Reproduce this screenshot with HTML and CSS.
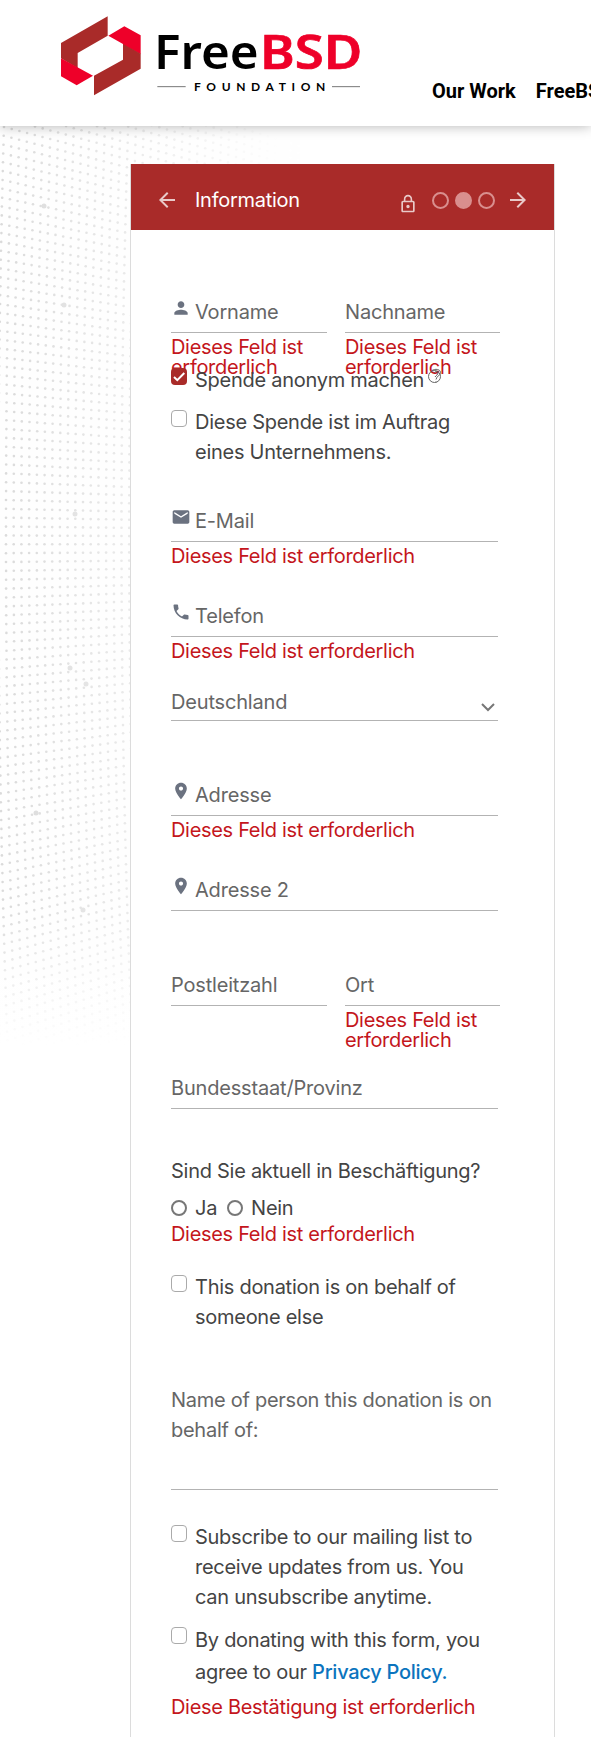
FILE: index.html
```html
<!DOCTYPE html>
<html lang="de">

<head>
    <meta charset="UTF-8">
    <title>FreeBSD Foundation</title>
    <link rel="stylesheet" href="styles.css">
</head>

<body>

    <svg class="dots" width="300" height="920" viewBox="0 126 300 920">
        <defs>
            <linearGradient id="fadeX" gradientUnits="userSpaceOnUse" x1="0" x2="290" y1="0" y2="0">
                <stop offset="0" stop-color="#dadada" />
                <stop offset="0.45" stop-color="#eaeaea" />
                <stop offset="1" stop-color="#fff" />
            </linearGradient>
            <linearGradient id="fadeY" x1="0" x2="0" y1="0" y2="1">
                <stop offset="0" stop-color="#fff" stop-opacity="0" />
                <stop offset="1" stop-color="#fff" />
            </linearGradient>
        </defs>
        <rect y="126" width="300" height="920" fill="#fefefe" />
        <g id="prikker" fill="url(#fadeX)"></g>
        <rect y="910" width="300" height="136" fill="url(#fadeY)" />
    </svg>

    <header class="banner">
        <svg class="logo" width="340" height="126" viewBox="0 0 1020 378">
            <polygon fill="#a92b29" points="63,129 203,49 203,107 113,159 113,205 63,175" />
            <polygon fill="#ee0029" points="63,175 159,227 110,256 63,229" />
            <polygon fill="#ee0029" points="205,107 253,79 302,106 302,163 249,135 249,132" />
            <polygon fill="#a92b29" points="249,132 302,161 302,206 162,286 162,227 249,179" />
            <g font-family="Noto Sans, sans-serif" font-size="141">
                <text x="342" y="206" font-weight="600" textLength="314" lengthAdjust="spacingAndGlyphs">Free</text>
                <text x="660" y="206" font-weight="600" fill="#ee0029" stroke="#ee0029" stroke-width="2" textLength="307" lengthAdjust="spacingAndGlyphs">BSD</text>
            </g>
            <text x="462" y="273" font-family="Lato, sans-serif" font-size="36" font-weight="700" textLength="394">FOUNDATION</text>
            <path d="M352 260H437M876 260H960" stroke="#777" stroke-width="3" />
        </svg>
        <nav class="menu">
            <a>Our Work</a>
            <a>FreeBSD</a>
        </nav>
    </header>

    <main class="card">
        <div class="topbar">
            <svg class="arrow" width="24" height="24" viewBox="0 0 24 24"><path d="M20 11H7.830l5.590-5.590L12 4l-8 8 8 8 1.410-1.410L7.830 13H20z" /></svg>
            <span class="title">Information</span>
            <svg class="lock" width="20" height="20" viewBox="0 0 24 24"><path d="M12 17c1.100 0 2-.9 2-2s-.9-2-2-2-2 .9-2 2 .9 2 2 2zm6-9h-1V6c0-2.760-2.240-5-5-5S7 3.240 7 6v2H6c-1.100 0-2 .9-2 2v10c0 1.100.9 2 2 2h12c1.100 0 2-.9 2-2V10c0-1.100-.9-2-2-2zM8.900 6c0-1.710 1.390-3.100 3.100-3.100s3.100 1.390 3.100 3.100v2H8.900V6zM18 20H6V10h12z" /></svg>
            <div class="steps">
                <i class="step"></i>
                <i class="step active"></i>
                <i class="step"></i>
            </div>
            <svg class="arrow" width="24" height="24" viewBox="0 0 24 24"><path d="M12 4l-1.410 1.410L16.170 11H4v2h12.170l-5.580 5.590L12 20l8-8z" /></svg>
        </div>

        <form class="form">
            <div class="row names">
                <div class="field">
                    <div class="input">
                        <svg class="icon" viewBox="0 0 24 24"><path d="M12 12c2.210 0 4-1.790 4-4s-1.790-4-4-4-4 1.790-4 4 1.790 4 4 4zm0 2c-2.670 0-8 1.340-8 4v2h16v-2c0-2.660-5.330-4-8-4z" /></svg>
                        <label>Vorname</label>
                    </div>
                    <p class="error">Dieses Feld ist erforderlich</p>
                </div>
                <div class="field">
                    <div class="input"><label>Nachname</label></div>
                    <p class="error">Dieses Feld ist erforderlich</p>
                </div>
            </div>

            <div class="check anonym">
                <svg class="box" width="16" height="17" viewBox="0 0 16 17"><rect width="16" height="17" rx="4" fill="#a92b29" /><path d="M3 9l3.300 3.200L13.300 5" fill="none" stroke="#fff" stroke-width="2" /></svg>
                <span>Spende anonym machen</span>
                <svg class="help" width="14" height="16" viewBox="0 0 14 16"><circle cx="6.500" cy="8.500" r="6" /><path d="M4 2.500C7 .5 12.500 1 12.500 4.500c0 3-4 3.500-4.500 7M8 13.500v1M6 5c1.500-2 4-1.500 4 0s-2 2.500-3 4" /></svg>
            </div>
            <div class="check">
                <i class="box empty"></i>
                <span>Diese Spende ist im Auftrag eines Unternehmens.</span>
            </div>

            <div class="field email">
                <div class="input">
                    <svg class="icon" viewBox="0 0 24 24"><path d="M20 4H4c-1.100 0-1.990.9-1.990 2L2 18c0 1.100.9 2 2 2h16c1.100 0 2-.9 2-2V6c0-1.100-.9-2-2-2zm0 4l-8 5-8-5V6l8 5 8-5v2z" /></svg>
                    <label>E-Mail</label>
                </div>
                <p class="error">Dieses Feld ist erforderlich</p>
            </div>
            <div class="field phone">
                <div class="input">
                    <svg class="icon" viewBox="0 0 24 24"><path d="M6.620 10.790c1.440 2.830 3.760 5.140 6.590 6.590l2.200-2.200c.27-.27.67-.36 1.020-.24 1.120.37 2.330.57 3.570.57.55 0 1 .45 1 1V20c0 .55-.45 1-1 1-9.390 0-17-7.610-17-17 0-.55.45-1 1-1h3.500c.55 0 1 .45 1 1 0 1.250.2 2.450.57 3.570.11.35.03.74-.25 1.020l-2.200 2.200z" /></svg>
                    <label>Telefon</label>
                </div>
                <p class="error">Dieses Feld ist erforderlich</p>
            </div>
            <div class="field country">
                <div class="input select">
                    <label>Deutschland</label>
                    <svg class="chevron" width="14" height="9" viewBox="0 0 14 9"><path d="M1 1l6 6 6-6" /></svg>
                </div>
            </div>
            <div class="field">
                <div class="input">
                    <svg class="icon" viewBox="0 0 24 24"><path d="M12 2C8.130 2 5 5.130 5 9c0 5.250 7 13 7 13s7-7.750 7-13c0-3.870-3.130-7-7-7zm0 9.500c-1.380 0-2.500-1.120-2.500-2.500s1.120-2.500 2.500-2.500 2.500 1.120 2.500 2.500-1.120 2.500-2.500 2.500z" /></svg>
                    <label>Adresse</label>
                </div>
                <p class="error">Dieses Feld ist erforderlich</p>
            </div>
            <div class="field">
                <div class="input">
                    <svg class="icon" viewBox="0 0 24 24"><path d="M12 2C8.130 2 5 5.130 5 9c0 5.250 7 13 7 13s7-7.750 7-13c0-3.870-3.130-7-7-7zm0 9.500c-1.380 0-2.500-1.120-2.500-2.500s1.120-2.500 2.500-2.500 2.500 1.120 2.500 2.500-1.120 2.500-2.500 2.500z" /></svg>
                    <label>Adresse 2</label>
                </div>
            </div>
            <div class="row city">
                <div class="field">
                    <div class="input"><label>Postleitzahl</label></div>
                </div>
                <div class="field">
                    <div class="input"><label>Ort</label></div>
                    <p class="error">Dieses Feld ist erforderlich</p>
                </div>
            </div>
            <div class="field state">
                <div class="input"><label>Bundesstaat/Provinz</label></div>
            </div>

            <p class="question">Sind Sie aktuell in Beschäftigung?</p>
            <div class="radios">
                <i class="radio"></i><span>Ja</span>
                <i class="radio"></i><span>Nein</span>
            </div>
            <p class="error tight">Dieses Feld ist erforderlich</p>

            <div class="check behalf">
                <i class="box empty"></i>
                <span>This donation is on behalf of someone else</span>
            </div>
            <div class="person">
                <label>Name of person this donation is on behalf of:</label>
            </div>
            <div class="check">
                <i class="box empty"></i>
                <span>Subscribe to our mailing list to receive updates from us. You can unsubscribe anytime.</span>
            </div>
            <div class="check privacy">
                <i class="box empty"></i>
                <span>By donating with this form, you agree to our <a>Privacy Policy.</a></span>
            </div>
            <p class="error confirm">Diese Bestätigung ist erforderlich</p>
        </form>
    </main>

    <script>
        // rows of dots that bend up towards the bottom
        let dots = "";
        for (let r = -8; r < 115; r++) {
            for (let c = -4; c < 40; c++) {
                const y0 = 126 + r * 8.9;
                const t = (y0 - 126) / 900;
                const x = c * 7.7 + 28 * (t - 0.45) * (t - 0.45) + 6;
                const y = y0 + x * (0.26 - 0.56 * t);
                dots += `<circle cx="${x.toFixed(1)}" cy="${y.toFixed(1)}" r="1.3"/>`;
            }
        }
        // a few bigger dots
        [[44, 206], [64, 305], [75, 514], [70, 668], [86, 684], [36, 813], [83, 910]].forEach(p => {
            dots += `<circle cx="${p[0]}" cy="${p[1]}" r="2.5"/>`;
        });
        document.querySelector("#prikker").innerHTML = dots;
    </script>

</body>

</html>
```
FILE: styles.css
```css
* {
    box-sizing: border-box;
}

body {
    margin: 0;
    height: 1737px;
    overflow: hidden;
    position: relative;
    background-color: #fff;
    font-family: Inter, "Liberation Sans", sans-serif;
    font-size: 20px;
    line-height: 30px;
    letter-spacing: -0.27px;
    color: #444;
}

p {
    margin: 0;
}

svg {
    display: block;
    flex-shrink: 0;
}

.dots {
    position: absolute;
    left: 0;
    top: 126px;
    z-index: -1;
}

.banner {
    display: flex;
    height: 126px;
    padding-left: 40px;
    letter-spacing: 0;
    background-color: #fff;
    box-shadow: 0 0 12px rgba(0, 0, 0, 0.3);
}

.menu {
    display: flex;
    gap: 20px;
    padding: 76px 0 0 52px;
    font-family: Roboto, sans-serif;
    font-weight: 700;
    font-size: 20px;
    color: #000;
    white-space: nowrap;
}

.card {
    width: 425px;
    height: 1600px;
    margin: 38px 0 0 130px;
    border: 1px solid #dcdcdc;
    border-top: 0;
    background-color: #fff;
}

.topbar {
    display: flex;
    align-items: center;
    height: 66px;
    padding: 6px 24px 0;
    background-color: #a92b29;
    color: #fff;
}

.arrow,
.lock {
    fill: #fff;
    opacity: 0.75;
}

.title {
    margin-left: 16px;
    flex: 1;
}

.lock {
    margin-top: 7px;
}

.steps {
    display: flex;
    gap: 6px;
    margin: 0 11px 0 14px;
}

.step {
    width: 17px;
    height: 17px;
    border: 2px solid #d98f8e;
    border-radius: 50%;
}

.step.active {
    background-color: #d98f8e;
}

.form {
    width: 327px;
    margin: 67px 0 0 40px;
}

.row {
    display: grid;
    grid-template-columns: 156px 155px;
    gap: 18px;
    width: 329px;
}

.names {
    height: 68px;
}

.city {
    height: 103px;
}

.field {
    height: 95px;
    color: #666;
}

.field.phone {
    height: 86px;
}

.field.country {
    height: 93px;
}

.field.state {
    height: 83px;
}

.input {
    display: flex;
    height: 36px;
    border-bottom: 1px solid #b3b3b3;
    letter-spacing: -0.18px;
}

.input.select {
    height: 34px;
    justify-content: space-between;
}

.icon {
    width: 20px;
    height: 20px;
    margin: 1px 4px 0 0;
    fill: #6b7280;
}

.chevron {
    margin: 16px 3px 0 0;
    fill: none;
    stroke: #777;
    stroke-width: 2;
}

.error {
    margin-top: 4px;
    line-height: 20px;
    letter-spacing: -0.31px;
    color: #c4161c;
}

.error.tight {
    margin-top: 1px;
}

.check {
    display: flex;
    align-items: flex-start;
    margin-bottom: 12px;
    position: relative;
}

.check span {
    width: 290px;
}

.check.anonym span {
    width: auto;
}

.box {
    width: 16px;
    height: 17px;
    margin: 3px 8px 0 0;
    flex-shrink: 0;
}

.empty {
    border: 1px solid #aaa;
    border-radius: 4px;
    background-color: #fff;
}

.help {
    margin: 3px 0 0 4px;
    fill: none;
    stroke: #555;
    stroke-width: 0.9;
}

.field.email {
    margin-top: 39px;
}

.question {
    height: 37px;
}

.radios {
    display: flex;
    align-items: center;
}

.radio {
    width: 16px;
    height: 16px;
    margin-right: 8px;
    border: 2px solid #777;
    border-radius: 50%;
}

.radios span {
    margin-right: 10px;
}

.check.behalf {
    margin: 28px 0 53px;
}

.person {
    height: 105px;
    margin-bottom: 32px;
    border-bottom: 1px solid #b3b3b3;
    color: #666;
}

.privacy {
    line-height: 32px;
}

.privacy a {
    color: #0b74be;
    font-weight: 500;
}

.error.confirm {
    margin-top: -3px;
}
```
